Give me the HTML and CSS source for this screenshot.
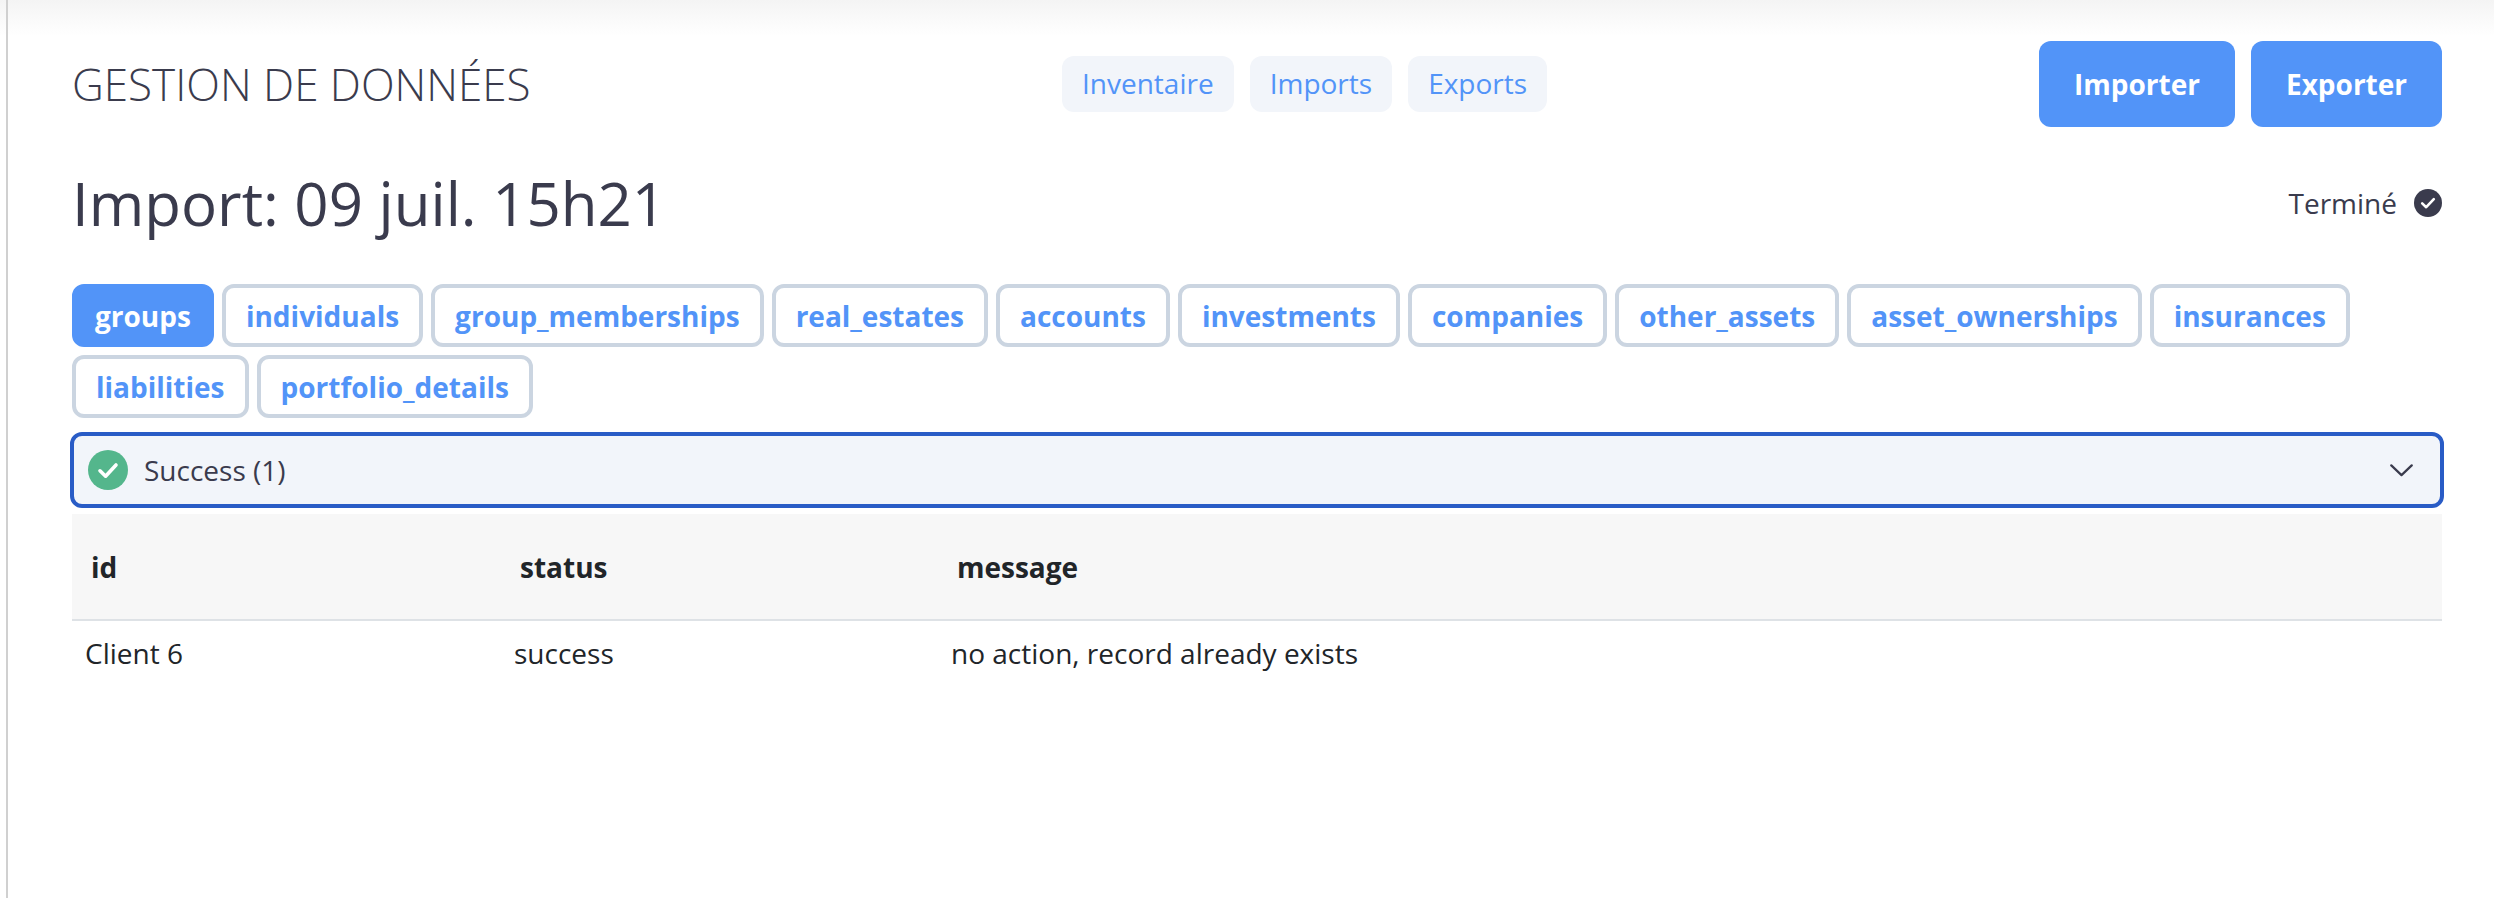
FILE: index.html
```html
<!DOCTYPE html>
<html lang="fr">
<head>
<meta charset="utf-8">
<title>Gestion de données</title>
<link rel="stylesheet" href="styles.css">
</head>
<body>
<div class="shell">
  <main class="page">
    <header class="topbar">
      <h1 class="brand">GESTION DE DONNÉES</h1>
      <nav class="nav">
        <a class="nav-item">Inventaire</a>
        <a class="nav-item">Imports</a>
        <a class="nav-item">Exports</a>
      </nav>
      <div class="actions">
        <button class="btn btn-import">Importer</button>
        <button class="btn btn-export">Exporter</button>
      </div>
    </header>
    <section class="title-row">
      <h2 class="title">Import: 09 juil. 15h21</h2>
      <div class="status">
        <span>Terminé</span>
        <svg class="status-icon" viewBox="0 0 28 28"><circle cx="14" cy="14" r="14" fill="#3a3b4d"/><path d="M8.2 14.4l4 3.8 7.6-8" fill="none" stroke="#fff" stroke-width="2.6" stroke-linecap="round" stroke-linejoin="round"/></svg>
      </div>
    </section>
    <div class="tabs">
      <button class="tab active">groups</button>
      <button class="tab">individuals</button>
      <button class="tab">group_memberships</button>
      <button class="tab">real_estates</button>
      <button class="tab">accounts</button>
      <button class="tab">investments</button>
      <button class="tab">companies</button>
      <button class="tab">other_assets</button>
      <button class="tab">asset_ownerships</button>
      <button class="tab">insurances</button>
      <button class="tab">liabilities</button>
      <button class="tab">portfolio_details</button>
    </div>
    <div class="accordion">
      <svg class="acc-icon" viewBox="0 0 40 40"><circle cx="20" cy="20" r="20" fill="#54b68c"/><path d="M12 20.8l5.6 5.4L28 15" fill="none" stroke="#fff" stroke-width="3.6" stroke-linecap="round" stroke-linejoin="round"/></svg>
      <span class="acc-label">Success (1)</span>
      <svg class="chevron" viewBox="0 0 24 14"><path d="M1 1.5l11 10.5L23 1.5" fill="none" stroke="#3a3b4d" stroke-width="2.4" stroke-linecap="round" stroke-linejoin="round"/></svg>
    </div>
    <table class="grid">
      <colgroup><col class="c1"><col class="c2"><col class="c3"></colgroup>
      <thead>
        <tr><th>id</th><th>status</th><th>message</th></tr>
      </thead>
      <tbody>
        <tr><td>Client 6</td><td>success</td><td>no action, record already exists</td></tr>
      </tbody>
    </table>
  </main>
</div>
</body>
</html>
```
FILE: styles.css
```css
* { box-sizing: border-box; }
html, body { margin: 0; height: 100%; background: #fff; }
body { font-family: "Open Sans", sans-serif; color: #3a3b4d; overflow: hidden; }
.shell {
  height: 898px;
  padding-left: 6px;
  background: linear-gradient(#f4f4f4 0, #fff 36px);
}
.page {
  height: 100%;
  border-left: 2px solid #d0d0d0;
  padding: 41px 52px 0 64px;
}
.topbar { display: grid; grid-template-columns: 990px auto 1fr; align-items: center; height: 86px; }
.brand { margin: 0; font-size: 44px; font-weight: 300; line-height: 60px; letter-spacing: 0; }
.nav { display: flex; gap: 16px; }
.nav-item {
  height: 56px; padding: 0 20px; border-radius: 12px; background: #f2f5fa;
  color: #5294f8; font-size: 28px; line-height: 55px;
}
.actions { display: flex; gap: 16px; justify-content: flex-end; }
.btn {
  height: 86px; border: 0; border-radius: 12px; background: #5294f8; color: #fff;
  font: 700 28px/36px "Open Sans", sans-serif; padding: 0;
}
.btn-import { width: 196px; }
.btn-export { width: 191px; }
.title-row { display: flex; justify-content: space-between; align-items: center; margin-top: 42px; height: 68px; }
.title { margin: 0; font-size: 60px; font-weight: 400; line-height: 68px; }
.status { display: flex; align-items: center; gap: 17px; font-size: 28px; }
.status-icon { width: 28px; height: 28px; }
.tabs { display: flex; flex-wrap: wrap; gap: 8px; margin-top: 47px; }
.tab {
  height: 63px; padding: 0 20px; border: 4px solid #cbd5e1; border-radius: 12px; background: #fff;
  color: #5294f8; font: 700 28px/36px "Open Sans", sans-serif;
}
.tab.active { padding: 0 19px; background: #5294f8; border-color: #5294f8; color: #fff; }
.accordion {
  display: flex; align-items: center; height: 76px; margin: 14px -2px 0;
  padding: 0 27px 0 14px; border: 4px solid #295cc6; border-radius: 12px; background: #f2f5fa;
  font-size: 28px; color: #3a3b4d;
}
.acc-icon { width: 40px; height: 40px; }
.acc-label { margin-left: 16px; flex: 1; }
.chevron { width: 23px; height: 13px; }
.grid { width: 100%; margin-top: 6px; border-collapse: collapse; table-layout: fixed; color: #212529; font-size: 28px; }
.c1 { width: 429px; }
.c2 { width: 437px; }
.grid th { height: 106px; padding: 0 0 0 19px; text-align: left; font-weight: 700; background: #f7f7f7; border-bottom: 2px solid #dee2e6; }
.grid td { height: 64px; padding: 0 0 0 13px; }
```
